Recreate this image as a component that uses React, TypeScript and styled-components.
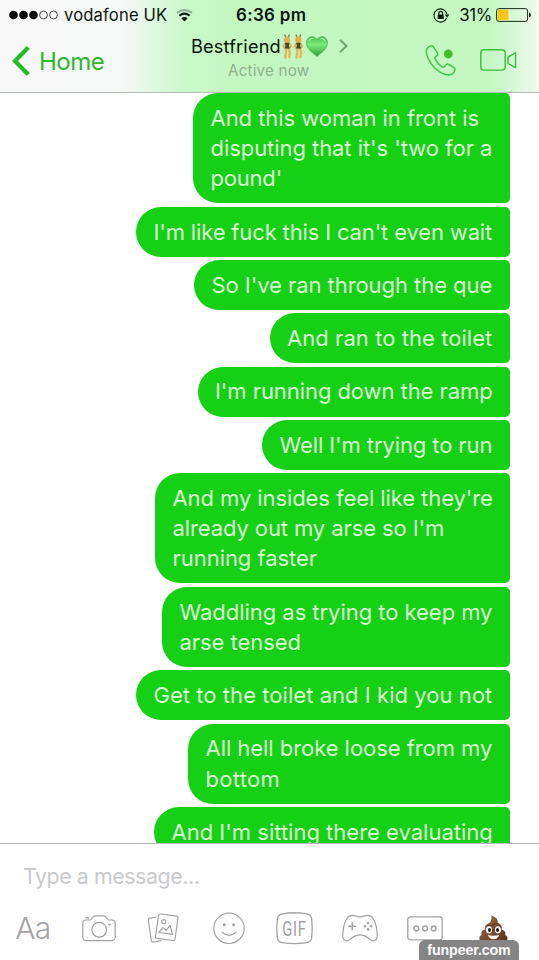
import React from "react";
import styled, { createGlobalStyle } from "styled-components";

const GlobalStyle = createGlobalStyle`
  * { box-sizing: border-box; }
  html, body { margin: 0; padding: 0; background: #fff; overflow: hidden; }
  svg { display: block; flex: none; overflow: visible; }
`;

const Screen = styled.div`
  position: relative;
  width: 539px;
  height: 960px;
  display: flex;
  flex-direction: column;
  overflow: hidden;
  background: #fff;
  font-family: Inter, "Liberation Sans", sans-serif;
`;

const Header = styled.header`
  flex: none;
  height: 93px;
  border-bottom: 1px solid #b6bfb6;
  background: linear-gradient(90deg, #f8f8f9 0, #f7f8f8 120px, #def8df 155px, #c8f8c8 190px, #c3f7c1 240px, #c4f7c2 490px, #d5f8d4 512px, #f2f9f2 539px);
`;

const StatusBar = styled.div`
  height: 30px;
  display: grid;
  grid-template-columns: 227px 90px 1fr;
  align-items: center;
  color: #0c160d;
`;

const Carrier = styled.div`
  display: flex;
  align-items: center;
  padding-left: 9px;
`;

const CarrierName = styled.span`
  margin: 0 9px 0 6px;
  width: 103px;
  font-size: 16.6px;
  letter-spacing: 0.15px;
  line-height: 30px;
  white-space: nowrap;
`;

const Clock = styled.div`
  padding-left: 9px;
  font-size: 17px;
  font-weight: 600;
  letter-spacing: 0.3px;
  line-height: 30px;
  white-space: nowrap;
`;

const StatusRight = styled.div`
  display: flex;
  align-items: center;
  justify-content: flex-end;
  padding-right: 8px;
`;

const Percent = styled.span`
  margin: 0 4px 0 9px;
  font-size: 16.9px;
  letter-spacing: -0.4px;
  line-height: 30px;
`;

const NavBar = styled.nav`
  height: 62px;
  display: grid;
  grid-template-columns: 190px 1fr 120px;
`;

const BackButton = styled.div`
  display: flex;
  align-items: center;
  gap: 9px;
  padding-left: 12px;
  color: #2cb82e;
  font-size: 24px;
  letter-spacing: -0.5px;
`;

const Title = styled.div`
  display: flex;
  flex-direction: column;
`;

const NameRow = styled.div`
  height: 32px;
  display: flex;
  align-items: center;
  padding-left: 1px;
`;

const Name = styled.span`
  width: 91px;
  color: #071407;
  font-size: 18.2px;
  letter-spacing: 0.15px;
  line-height: 32px;
  white-space: nowrap;
`;

const Presence = styled.div`
  padding-left: 38px;
  color: #8fb08f;
  font-size: 15.2px;
  letter-spacing: 0.2px;
  line-height: 18px;
`;

const CallActions = styled.div`
  display: flex;
  gap: 24px;
  padding: 14px 0 0 6px;
`;

const Thread = styled.main`
  flex: none;
  height: 750px;
  display: flex;
  flex-direction: column;
  align-items: flex-end;
  gap: 3.3px;
  padding-right: 29px;
  overflow: hidden;
`;

const Bubble = styled.div<{ $width: number }>`
  flex: none;
  width: ${(p) => p.$width}px;
  padding: 9.9px 0 9.9px 17.5px;
  border-radius: 25px 5px 5px 25px;
  background: #15d015;
  color: #dcfbd6;
`;

const Line = styled.div<{ $tracking: number }>`
  font-size: 22px;
  line-height: 30.2px;
  letter-spacing: ${(p) => p.$tracking}px;
  white-space: nowrap;
`;

const Composer = styled.footer`
  flex: none;
  height: 117px;
  border-top: 1px solid #b9b9bb;
  background: #fff;
`;

const Placeholder = styled.div`
  height: 66px;
  padding-left: 23px;
  color: #c9c9cb;
  font-size: 21.3px;
  letter-spacing: -0.4px;
  line-height: 65px;
`;

const Tools = styled.div`
  height: 42px;
  display: grid;
  grid-template-columns: 66px repeat(6, 65.3px) 70.5px;
  align-items: start;
  justify-items: center;
`;

const TextTool = styled.div`
  color: #a3a3a5;
  font-size: 30px;
  font-weight: 300;
  letter-spacing: -0.6px;
  line-height: 36px;
`;

const Watermark = styled.div`
  position: absolute;
  left: 419px;
  top: 940px;
  width: 100px;
  height: 20px;
  border-radius: 6px 6px 0 0;
  background: #858585;
  color: #fff;
  font: bold 14.2px/21px "Liberation Sans", Arial, sans-serif;
  letter-spacing: -0.1px;
  text-align: center;
`;

const messages: { width: number; lines: [string, number][] }[] = [
  { width: 317, lines: [["And this woman in front is", -0.05], ["disputing that it's 'two for a", -0.06], ["pound'", -0.2]] },
  { width: 374, lines: [["I'm like fuck this I can't even wait", -0.15]] },
  { width: 316, lines: [["So I've ran through the que", -0.06]] },
  { width: 240.5, lines: [["And ran to the toilet", 0.06]] },
  { width: 312.5, lines: [["I'm running down the ramp", -0.07]] },
  { width: 248, lines: [["Well I'm trying to run", -0.1]] },
  { width: 355, lines: [["And my insides feel like they're", -0.08], ["already out my arse so I'm", -0.1], ["running faster", -0.04]] },
  { width: 348, lines: [["Waddling as trying to keep my", -0.04], ["arse tensed", -0.05]] },
  { width: 374, lines: [["Get to the toilet and I kid you not", 0.05]] },
  { width: 322, lines: [["All hell broke loose from my", -0.05], ["bottom", 0.3]] },
  { width: 356, lines: [["And I'm sitting there evaluating", 0]] },
];

const Signal = () => (
  <svg width="49" height="10" viewBox="0 0 49 10">
    {[4.5, 14.5, 24.5].map((x) => <circle key={x} cx={x} cy="5" r="4.3" fill="#050505" />)}
    {[34.5, 44.5].map((x) => <circle key={x} cx={x} cy="5" r="3.9" fill="none" stroke="#333" strokeWidth=".9" />)}
  </svg>
);

const Wifi = () => (
  <svg width="17" height="13" viewBox="0 0 17 13" fill="none">
    <path d="M1 4Q8.5-2.2 16 4" stroke="#8fae91" strokeWidth="1.9" />
    <path d="M3.3 6.8Q8.5 2.4 13.7 6.8" stroke="#142016" strokeWidth="2" />
    <path d="M5.4 9.2Q8.5 6.8 11.6 9.2L8.5 12.5Z" fill="#0b170d" />
  </svg>
);

const RotationLock = () => (
  <svg width="17" height="15" viewBox="0 0 17 15" fill="none" stroke="#0d1c0d">
    <path d="M13.6 10.2A6.6 6.6 0 1 1 14 6" strokeWidth="1.1" />
    <path d="M11.7 6.6h4.7l-2.3 3.1Z" fill="#0d1c0d" stroke="none" />
    <path d="M5.8 7V5.3a1.9 1.9 0 0 1 3.8 0V7" strokeWidth="1.2" />
    <rect x="4.7" y="6.6" width="6" height="4.4" rx=".5" fill="#0d1c0d" stroke="none" />
  </svg>
);

const Battery = () => (
  <svg width="35" height="14" viewBox="0 0 35 14">
    <rect x=".6" y=".6" width="31" height="12.8" rx="2.4" fill="none" stroke="#1b2b1b" strokeWidth="1" />
    <rect x="1.8" y="1.8" width="10.6" height="10.4" rx="1" fill="#fbc513" />
    <path d="M33 4.5q2 .6 2 2.5t-2 2.5Z" fill="#152015" />
  </svg>
);

const BackChevron = () => (
  <svg width="18" height="30" viewBox="0 0 18 30" fill="none" stroke="#22bd24" strokeWidth="4.2">
    <path d="M16.3 1.5 3 15l13.3 13.5" />
  </svg>
);

const Dancers = () => (
  <svg width="22" height="25" viewBox="0 0 22 25">
    {[0, 11.3].map((x) => (
      <g key={x} transform={`translate(${x} 0)`} strokeLinecap="round">
        <path d="M2.8 1 4 4M7.2 1 6.2 4" stroke="#8c6d2c" strokeWidth="1.3" fill="none" />
        <path d="M4.2 14 4 18.5 3.2 23.5M6.4 14 7.8 18.5 7.2 23.2" stroke="#e6b552" strokeWidth="2.3" fill="none" />
        <path d="M3 9.5 1.2 12.3l1.6 2M7.3 9.5 9 12l-1.4 2.3" stroke="#dfac4b" strokeWidth="1.6" fill="none" />
        <ellipse cx="5" cy="5.8" rx="3.2" ry="3.3" fill="#e5b04b" />
        <path d="M2.8 8.8h4.7l-.6 2.8.8 2.9H2.8l.7-2.9Z" fill="#4d4328" />
      </g>
    ))}
  </svg>
);

const Heart = () => (
  <svg width="22" height="21" viewBox="0 0 22 21">
    <defs>
      <linearGradient id="heartFill" x1="0" y1="0" x2="0" y2="1">
        <stop offset="0" stopColor="#4fbe53" />
        <stop offset=".4" stopColor="#7cec7b" />
        <stop offset="1" stopColor="#2ba02f" />
      </linearGradient>
    </defs>
    <path d="M11 20.5C7 16.5.6 13.5.6 6.5.6-.3 8.8-1 11 3.8 13.2-1 21.4-.3 21.4 6.5c0 7-6.4 10-10.4 14Z" fill="url(#heartFill)" stroke="#3ca941" strokeWidth=".7" />
    <path d="M3 5Q4 1.8 7.3 2.7M14.7 2.7Q18 1.8 19 5" stroke="#b7f5b6" strokeWidth="1.2" fill="none" />
  </svg>
);

const TitleChevron = () => (
  <svg width="9" height="14" viewBox="0 0 9 14" fill="none" stroke="#71a172" strokeWidth="2">
    <path d="m1 .8 6.5 6.2L1 13.2" />
  </svg>
);

const Phone = () => (
  <svg width="31" height="31" viewBox="0 0 31 31">
    <path d="M5.1 1.2C1.5 2.4.1 5 1.1 9.2c2.2 8.8 9.9 17.6 18.2 20.2 5.2 1.6 8.7.1 10.1-3.9.4-1.1 0-2-.9-2.6l-5.2-3.2c-1.2-.7-2.3-.4-3.1.6l-1.1 1.5c-.7.8-1.6.9-2.5.3-3.2-2.1-5.5-4.8-7.1-8-.4-.9-.2-1.7.6-2.3l1.2-.8c1-.7 1.3-1.7.8-2.8L8.3 2.8C7.6 1.3 6.5.7 5.1 1.2Z" transform="translate(.5 .8)" fill="none" stroke="#45c647" strokeWidth="1.5" />
    <circle cx="23.3" cy="10" r="4.4" fill="#42bd28" />
  </svg>
);

const VideoSlot = styled.div`
  padding-top: 5px;
`;

const Video = () => (
  <svg width="37" height="22" viewBox="0 0 37 22" fill="none" stroke="#35bf38" strokeWidth="1.4">
    <rect x=".8" y=".8" width="24.4" height="20.3" rx="3.4" />
    <path d="M28 8.1 35.5 3.8v14.8L28 14.5Z" strokeLinejoin="round" />
  </svg>
);

const CameraTool = () => (
  <svg width="34" height="37" viewBox="0 0 34 37" fill="none" stroke="#a3a3a5" strokeWidth="1.2">
    <path d="M4.5 10h3.7c1.8 0 2.1-4.2 4.8-4.2h9c2.7 0 3 4.2 4.8 4.2h2.8q3.6 0 3.6 3.6v13.5q0 3.5-3.6 3.5H4.4q-3.6 0-3.6-3.5V13.6Q.8 10 4.5 10Z" />
    <circle cx="17.2" cy="19.8" r="7.4" />
    <path d="M3.7 7.7h3.4" strokeWidth="1.7" />
    <circle cx="27.5" cy="14.6" r="1.2" fill="#a3a3a5" stroke="none" />
  </svg>
);

const PhotoTool = () => (
  <svg width="33" height="37" viewBox="0 0 33 37" fill="none" stroke="#a3a3a5" strokeWidth="1.2" strokeLinejoin="round">
    <path d="M9.4 7.1 2.8 8.1Q1 8.4 1.3 10L4.3 30.5q.3 1.9 2.1 1.6l8-1.5" />
    <path d="m13.6 4 16 2.1q1.7.2 1.4 1.9l-3 21q-.2 1.8-2 1.5L10 28.4q-1.8-.2-1.5-2l3-20.8Q11.8 3.8 13.6 4Z" />
    <circle cx="16.7" cy="11.6" r="2" />
    <path d="m11.8 22.5 4.1-4.9 3.2 2.7 3.9-4.7 2.6 8.8Z" />
  </svg>
);

const SmileyTool = () => (
  <svg width="32" height="37" viewBox="0 0 32 37" fill="none" stroke="#a3a3a5" strokeWidth="1.2">
    <circle cx="16" cy="18.3" r="15.2" />
    <path d="M8.8 22Q16 28.6 23.2 22" />
    <circle cx="11.3" cy="14.8" r="1.5" fill="#a3a3a5" stroke="none" />
    <circle cx="20.5" cy="14.8" r="1.5" fill="#a3a3a5" stroke="none" />
  </svg>
);

const GifFrame = styled.div`
  position: relative;
  width: 37px;
  height: 37px;
`;

const GifLabel = styled.span`
  position: absolute;
  inset: 2px 0 0;
  color: #a1a1a3;
  font: 20px/34px "Roboto", sans-serif;
  text-align: center;
  letter-spacing: 1px;
  transform: scaleX(0.74);
`;

const GifTool = () => (
  <GifFrame>
    <svg width="37" height="37" viewBox="0 0 37 37" fill="none" stroke="#a3a3a5" strokeWidth="1.3">
      <path d="M6.3 3.8Q18.5 1.7 30.7 3.8q4.2.7 4.9 4.8 1.4 9.7 0 19.3-.7 4.1-4.9 4.8-12.2 2-24.4 0-4.2-.7-4.9-4.8Q0 18.3 1.4 8.6q.7-4.1 4.9-4.8Z" />
    </svg>
    <GifLabel>GIF</GifLabel>
  </GifFrame>
);

const GameTool = () => (
  <svg width="36" height="37" viewBox="0 0 36 37" fill="none" stroke="#a3a3a5" strokeWidth="1.2">
    <path d="M5.1 8.2C7.5 4.4 11.5 5.1 15 6.3q3 .8 6 0c3.5-1.2 7.5-1.9 9.9 1.9 3 4.8 4.4 12 4.3 18.1-.1 5.2-5 5.7-7.8 2.6-6.2-5.3-12.6-5.3-18.8 0C5.8 32 .9 31.5.8 26.3.7 20.2 2.1 13 5.1 8.2Z" />
    <path d="M10.3 12.2v8M6.3 16.2h8" strokeWidth="1.6" />
    {[[26, 13], [22.8, 16.2], [29.2, 16.2], [26, 19.4]].map(([x, y]) => <circle key={`${x}-${y}`} cx={x} cy={y} r="1.3" fill="#a3a3a5" stroke="none" />)}
  </svg>
);

const MoreTool = () => (
  <svg width="36" height="37" viewBox="0 0 36 37" fill="none" stroke="#a3a3a5" strokeWidth="1.3">
    <rect x=".8" y="6.8" width="34.4" height="23" rx="2.6" />
    {[9.3, 18, 26.7].map((x) => <circle key={x} cx={x} cy="18.4" r="2.4" strokeWidth="1.5" />)}
  </svg>
);

const PoopTool = () => (
  <svg width="29" height="37" viewBox="0 0 29 37">
    <defs>
      <linearGradient id="poopFill" x1="0" y1="0" x2="1" y2="1">
        <stop offset="0" stopColor="#a77750" />
        <stop offset=".5" stopColor="#7b4c2f" />
        <stop offset="1" stopColor="#56301c" />
      </linearGradient>
    </defs>
    <path d="M12.2 5.4c4.2 1 7.6 4.2 6.3 7.4 3.6 1.3 5.2 4 4 7 3.3.5 4.7 2.8 3.6 5.2 2.6 1 3.3 4.2 1.2 6-3.6 2.7-22.3 2.7-25.6 0-2.2-1.9-1.6-5 1-6-1-2.6.2-4.8 3.5-5.4-1-3 .5-5.1 4-6.6 2.2-1.5 2.8-4.7 2-7.6Z" fill="url(#poopFill)" />
    <path d="M8.2 15.3q6 .8 9.5-2M6 21.5q8-1.4 15.5-1.9" stroke="#4e2c1a" strokeWidth=".8" fill="none" />
    <ellipse cx="10" cy="19.8" rx="3" ry="3.6" fill="#fff" />
    <ellipse cx="19" cy="19.8" rx="3" ry="3.6" fill="#fff" />
    <ellipse cx="10.5" cy="20" rx="1.5" ry="2" fill="#231a18" />
    <ellipse cx="18.5" cy="20" rx="1.5" ry="2" fill="#231a18" />
    <path d="M8.8 25q5.7 1.5 11.4 0-1.7 4.2-5.7 4.2T8.8 25Z" fill="#fff" />
  </svg>
);

const Spacer = styled.span<{ $width: number }>`
  flex: none;
  width: ${(p) => p.$width}px;
`;

export default function App() {
  return (
    <Screen>
      <GlobalStyle />
      <Header>
        <StatusBar>
          <Carrier>
            <Signal />
            <CarrierName>vodafone UK</CarrierName>
            <Wifi />
          </Carrier>
          <Clock>6:36 pm</Clock>
          <StatusRight>
            <RotationLock />
            <Percent>31%</Percent>
            <Battery />
          </StatusRight>
        </StatusBar>
        <NavBar>
          <BackButton>
            <BackChevron />
            <span>Home</span>
          </BackButton>
          <Title>
            <NameRow>
              <Name>Bestfriend</Name>
              <Dancers />
              <Spacer $width={2} />
              <Heart />
              <Spacer $width={11} />
              <TitleChevron />
            </NameRow>
            <Presence>Active now</Presence>
          </Title>
          <CallActions>
            <Phone />
            <VideoSlot>
              <Video />
            </VideoSlot>
          </CallActions>
        </NavBar>
      </Header>
      <Thread>
        {messages.map((m) => (
          <Bubble key={m.lines[0][0]} $width={m.width}>
            {m.lines.map(([text, tracking]) => (
              <Line key={text} $tracking={tracking}>{text}</Line>
            ))}
          </Bubble>
        ))}
      </Thread>
      <Composer>
        <Placeholder>Type a message...</Placeholder>
        <Tools>
          <TextTool>Aa</TextTool>
          <CameraTool />
          <PhotoTool />
          <SmileyTool />
          <GifTool />
          <GameTool />
          <MoreTool />
          <PoopTool />
        </Tools>
      </Composer>
      <Watermark>funpeer.com</Watermark>
    </Screen>
  );
}
